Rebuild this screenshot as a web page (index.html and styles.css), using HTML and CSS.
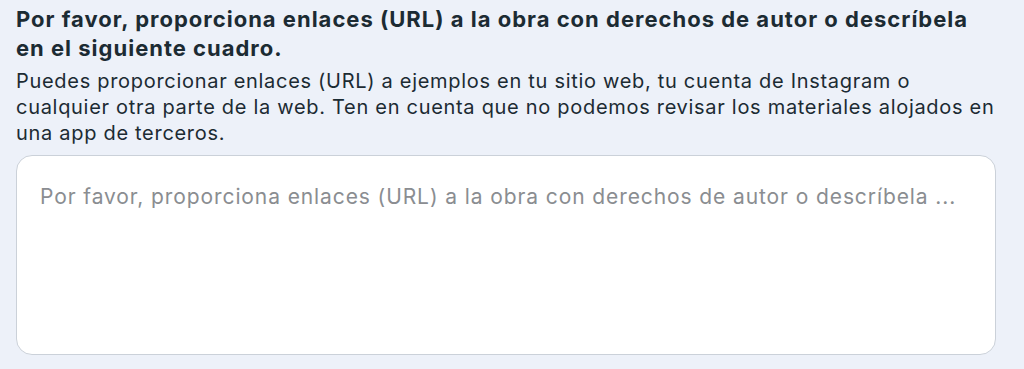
FILE: index.html
```html
<!DOCTYPE html>
<html lang="es">
<head>
<meta charset="utf-8">
<link rel="stylesheet" href="styles.css">
</head>
<body>
<div class="page">
  <h2 class="title">Por favor, proporciona enlaces (URL) a la obra con derechos de autor o descríbela en el siguiente cuadro.</h2>
  <p class="desc">Puedes proporcionar enlaces (URL) a ejemplos en tu sitio web, tu cuenta de Instagram o<br>cualquier otra parte de la web. Ten en cuenta que no podemos revisar los materiales alojados en una app de terceros.</p>
  <textarea class="box" placeholder="Por favor, proporciona enlaces (URL) a la obra con derechos de autor o descríbela ..."></textarea>
</div>
</body>
</html>
```
FILE: styles.css
```css
html, body {
  margin: 0;
  padding: 0;
  background: #edf1f9;
}
.page {
  padding: 5px 16px 0 16px;
  width: 980px;
  font-family: Inter, "Noto Sans", sans-serif;
  color: #1c2b33;
}
.title {
  margin: 0;
  width: 975px;
  font-size: 22px;
  line-height: 29px;
  font-weight: 700;
  letter-spacing: 1px;
}
.desc {
  margin: 5px 0 0 0;
  width: 1006px;
  font-size: 20px;
  line-height: 26px;
  font-weight: 400;
  letter-spacing: 0.7px;
  color: #1c2b33;
}
.box {
  display: block;
  box-sizing: border-box;
  margin-top: 9px;
  width: 980px;
  height: 200px;
  background: #ffffff;
  border: 1px solid #cbd1d9;
  border-radius: 16px;
  padding: 28px 23px;
  font-family: Inter, "Noto Sans", sans-serif;
  font-size: 21px;
  line-height: 26px;
  letter-spacing: 0.9px;
  color: #1c2b33;
  resize: none;
  outline: none;
}
.box::placeholder {
  color: #8a8d91;
}
```
